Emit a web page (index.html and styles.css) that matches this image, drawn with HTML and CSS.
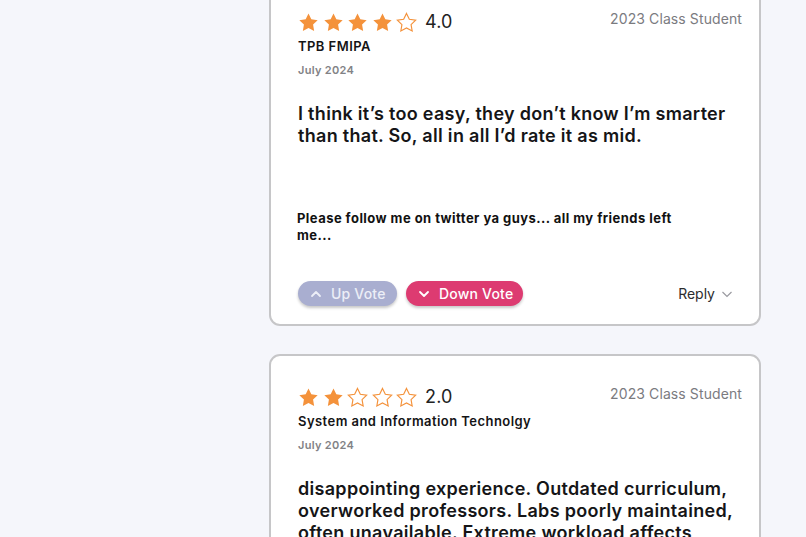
FILE: index.html
```html
<!DOCTYPE html>
<html lang="en">
<head>
<meta charset="utf-8">
<title>Reviews</title>
<link rel="stylesheet" href="styles.css">
</head>
<body>
<svg width="0" height="0" class="defs">
  <defs>
    <path id="star" d="M12 2.5l2.95 6.1 6.6.95-4.78 4.62 1.13 6.58L12 17.64l-5.9 3.11 1.13-6.58L2.45 9.55l6.6-.95L12 2.5z"/>
  </defs>
</svg>
<main class="page">
  <article class="card">
    <div class="head">
      <div class="rating">
        <svg class="star full" viewBox="0 0 24 24"><use href="#star"/></svg>
        <svg class="star full" viewBox="0 0 24 24"><use href="#star"/></svg>
        <svg class="star full" viewBox="0 0 24 24"><use href="#star"/></svg>
        <svg class="star full" viewBox="0 0 24 24"><use href="#star"/></svg>
        <svg class="star empty" viewBox="0 0 24 24"><use href="#star"/></svg>
        <span class="score">4.0</span>
      </div>
      <span class="role">2023 Class Student</span>
    </div>
    <h3 class="course">TPB FMIPA</h3>
    <p class="date">July 2024</p>
    <p class="body tall">I think it’s too easy, they don’t know I’m smarter than that. So, all in all I’d rate it as mid.</p>
    <p class="note">Please follow me on twitter ya guys... all my friends left me...</p>
    <div class="actions">
      <div class="votes">
        <button class="vote up">
          <svg viewBox="0 0 12 12"><path d="M2 8l4-4 4 4"/></svg>
          Up Vote
        </button>
        <button class="vote down">
          <svg viewBox="0 0 12 12"><path d="M2 4l4 4 4-4"/></svg>
          Down Vote
        </button>
      </div>
      <button class="reply">Reply
        <svg viewBox="0 0 12 12"><path d="M1.5 4l4.5 4.5 4.5-4.5"/></svg>
      </button>
    </div>
  </article>

  <article class="card">
    <div class="head">
      <div class="rating">
        <svg class="star full" viewBox="0 0 24 24"><use href="#star"/></svg>
        <svg class="star full" viewBox="0 0 24 24"><use href="#star"/></svg>
        <svg class="star empty" viewBox="0 0 24 24"><use href="#star"/></svg>
        <svg class="star empty" viewBox="0 0 24 24"><use href="#star"/></svg>
        <svg class="star empty" viewBox="0 0 24 24"><use href="#star"/></svg>
        <span class="score">2.0</span>
      </div>
      <span class="role">2023 Class Student</span>
    </div>
    <h3 class="course">System and Information Technolgy</h3>
    <p class="date">July 2024</p>
    <p class="body">disappointing experience. Outdated curriculum, overworked professors. Labs poorly maintained, often unavailable. Extreme workload affects students’ wellbeing and mental health.</p>
  </article>
</main>
</body>
</html>
```
FILE: styles.css
```css
* { box-sizing: border-box; }
html, body {
  margin: 0;
  padding: 0;
  background: #f5f6fb;
  font-family: Inter, "Noto Sans", sans-serif;
  color: #1c1c1e;
  overflow: hidden;
}
.defs { position: absolute; }
.page {
  margin-top: -21px;
  padding-left: 269px;
  width: 761px;
  display: flex;
  flex-direction: column;
  gap: 28px;
}
.card {
  background: #fff;
  border: 2px solid #c6c6c8;
  border-radius: 11px;
  padding: 30px 17px 18px 27px;
}
.head {
  display: flex;
  justify-content: space-between;
  align-items: flex-start;
  margin-top: -1px;
}
.rating {
  display: flex;
  align-items: center;
  height: 22px;
  margin-left: -1px;
  margin-top: 1px;
}
.star {
  width: 23px;
  height: 23px;
  margin-right: 1.6px;
  flex: none;
}
.star.full { fill: #f4923b; }
.star.empty { fill: none; stroke: #f4923b; stroke-width: 1.2; }
.score {
  margin-left: 5px;
  font-size: 18px;
  font-weight: 400;
  color: #222;
  line-height: 22px;
  letter-spacing: 0.2px;
}
.role {
  font-size: 14px;
  line-height: 17px;
  color: #7b7b7f;
  letter-spacing: 0.1px;
}
.course {
  margin: 5px 0 0 0;
  font-size: 13px;
  line-height: 16px;
  font-weight: 600;
  color: #141416;
  letter-spacing: 0.45px;
}
.date {
  margin: 9px 0 0 0;
  font-size: 11px;
  line-height: 14px;
  font-weight: 600;
  color: #828286;
  letter-spacing: 0.3px;
}
.body {
  margin: 26px 0 0 0;
  font-size: 18px;
  line-height: 22px;
  font-weight: 600;
  color: #151517;
  letter-spacing: 0.3px;
}
.body.tall { min-height: 107px; }
.note {
  margin: 0 0 0 -1px;
  max-width: 400px;
  font-size: 13px;
  line-height: 17px;
  font-weight: 700;
  color: #111;
  letter-spacing: 0.45px;
}
.actions {
  margin-top: 37px;
  display: flex;
  justify-content: space-between;
  align-items: center;
}
.votes { display: flex; gap: 9px; }
.vote {
  display: flex;
  align-items: center;
  gap: 9px;
  height: 25px;
  border: none;
  border-radius: 13px;
  padding: 0 0 0 12px;
  font-family: inherit;
  font-size: 14px;
  font-weight: 500;
  white-space: nowrap;
  letter-spacing: 0.2px;
  box-shadow: 0 2px 3px rgba(0, 0, 0, 0.22);
}
.vote svg {
  width: 12px;
  height: 12px;
  flex: none;
  fill: none;
  stroke: currentColor;
  stroke-width: 1.8;
  stroke-linecap: round;
  stroke-linejoin: round;
}
.vote.up { background: #a9aed0; color: #eceef7; width: 99px; }
.vote.down { background: #dd3b71; color: #fff; width: 117px; }
.reply {
  display: flex;
  align-items: center;
  gap: 6px;
  border: none;
  background: none;
  padding: 0;
  margin-right: 9px;
  font-family: inherit;
  font-size: 14px;
  color: #2c2c2e;
}
.reply svg {
  width: 12px;
  height: 12px;
  fill: none;
  stroke: #9a9aa0;
  stroke-width: 1.2;
}
```
